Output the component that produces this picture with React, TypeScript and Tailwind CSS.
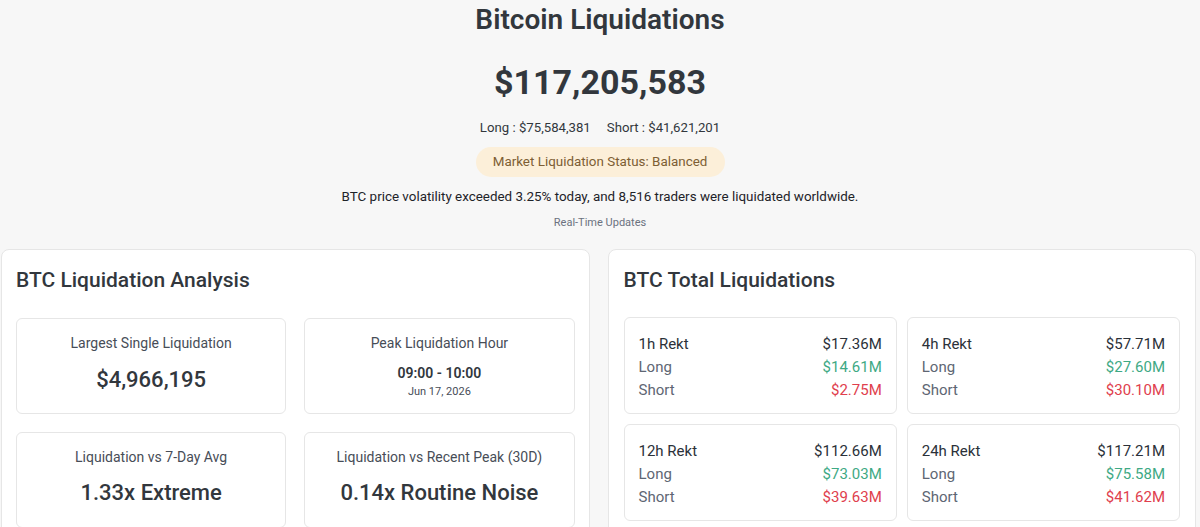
const font = { fontFamily: 'Roboto, "Liberation Sans", sans-serif' };

interface RektData {
  label: string;
  total: string;
  long: string;
  short: string;
}

const rekt: RektData[] = [
  { label: '1h Rekt', total: '$17.36M', long: '$14.61M', short: '$2.75M' },
  { label: '4h Rekt', total: '$57.71M', long: '$27.60M', short: '$30.10M' },
  { label: '12h Rekt', total: '$112.66M', long: '$73.03M', short: '$39.63M' },
  { label: '24h Rekt', total: '$117.21M', long: '$75.58M', short: '$41.62M' },
];

function StatBox({ label, children }: { label: string; children: React.ReactNode }) {
  return (
    <div className="h-[96px] rounded-md border border-[#e6e6e6] bg-white pt-[14px] text-center">
      <div className="text-[14px] leading-[20px] text-[#474d57]">{label}</div>
      {children}
    </div>
  );
}

function RektBox({ item }: { item: RektData }) {
  return (
    <div className="h-[97px] rounded-md border border-[#e6e6e6] bg-white px-[14px] pt-[15px] text-[15px] leading-[23px]">
      <div className="flex justify-between text-[#2b3139]">
        <span>{item.label}</span>
        <span>{item.total}</span>
      </div>
      <div className="flex justify-between">
        <span className="text-[#5e6673]">Long</span>
        <span className="text-[#3ea984]">{item.long}</span>
      </div>
      <div className="flex justify-between">
        <span className="text-[#5e6673]">Short</span>
        <span className="text-[#e0404d]">{item.short}</span>
      </div>
    </div>
  );
}

export default function App() {
  return (
    <div style={font} className="min-h-[527px] bg-[#f7f7f7] text-[#32373d]">
      <div className="flex flex-col items-center pt-[2px]">
        <h1 className="text-[28px] leading-[36px] font-semibold">Bitcoin Liquidations</h1>
        <div className="mt-[22px] text-[34px] leading-[44px] font-bold">$117,205,583</div>
        <div className="mt-[14px] flex gap-[16px] text-[13.2px] leading-[20px] text-[#32373d]">
          <span>Long : $75,584,381</span>
          <span>Short : $41,621,201</span>
        </div>
        <div className="mt-[9px] flex h-[30px] w-[249px] items-center justify-center rounded-full bg-[#fcefd9] text-[13.4px] text-[#7d5e34]">
          Market Liquidation Status: Balanced
        </div>
        <p className="mt-[10px] text-[13.4px] leading-[20px] text-[#1e2329]">
          BTC price volatility exceeded 3.25% today, and 8,516 traders were liquidated worldwide.
        </p>
        <div className="mt-[8px] text-[11px] leading-[16px] text-[#6b7280]">Real-Time Updates</div>
      </div>

      <div className="mt-[18px] grid grid-cols-2 gap-[18px] pl-[1px] pr-[4px]">
        <section className="rounded-lg border border-[#e6e6e6] bg-white px-[14px] pt-[16px] pb-[16px]">
          <h2 className="text-[21px] leading-[28px] font-medium">BTC Liquidation Analysis</h2>
          <div className="mt-[24px] grid grid-cols-2 gap-[18px]">
            <StatBox label="Largest Single Liquidation">
              <div className="mt-[12px] text-[22px] leading-[30px] font-medium">$4,966,195</div>
            </StatBox>
            <StatBox label="Peak Liquidation Hour">
              <div className="mt-[11px] text-[14px] leading-[18px] font-semibold">09:00 - 10:00</div>
              <div className="text-[11px] leading-[19px] text-[#474d57]">Jun 17, 2026</div>
            </StatBox>
            <StatBox label="Liquidation vs 7-Day Avg">
              <div className="mt-[11px] text-[22px] leading-[30px] font-medium">1.33x Extreme</div>
            </StatBox>
            <StatBox label="Liquidation vs Recent Peak (30D)">
              <div className="mt-[11px] text-[22px] leading-[30px] font-medium">0.14x Routine Noise</div>
            </StatBox>
          </div>
        </section>

        <section className="rounded-lg border border-[#e6e6e6] bg-white px-[15px] pt-[16px] pb-[16px]">
          <h2 className="text-[21px] leading-[28px] font-medium">BTC Total Liquidations</h2>
          <div className="mt-[23px] grid grid-cols-2 gap-[10px]">
            {rekt.map((item) => (
              <RektBox key={item.label} item={item} />
            ))}
          </div>
        </section>
      </div>
    </div>
  );
}
